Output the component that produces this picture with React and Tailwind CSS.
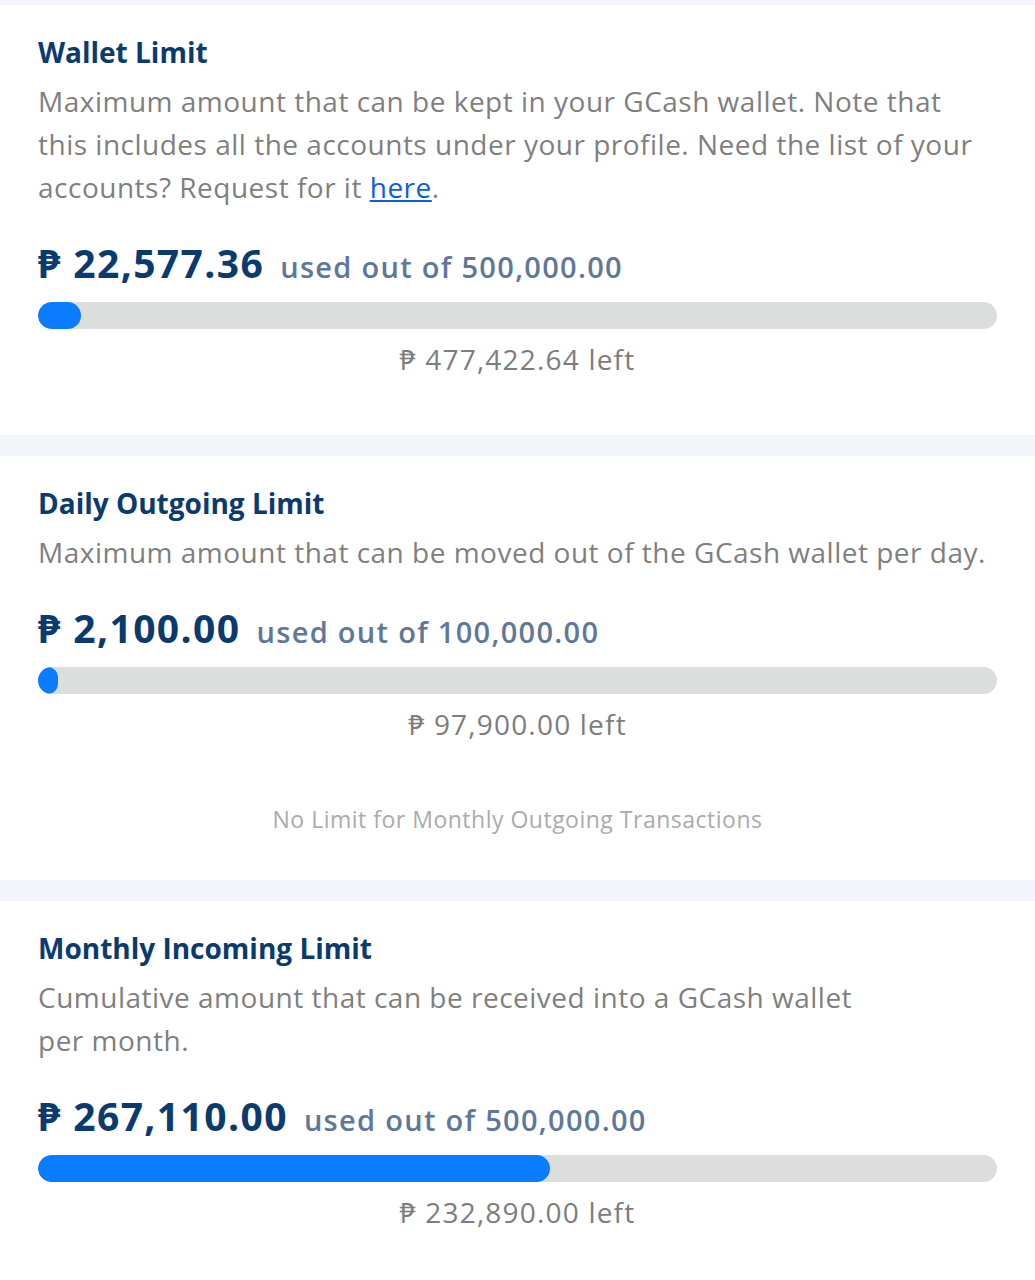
const SECTIONS = [
  {
    title: 'Wallet Limit',
    desc: (
      <>
        Maximum amount that can be kept in your GCash wallet. Note that
        <br />
        this includes all the accounts under your profile. Need the list of your
        <br />
        accounts? Request for it{' '}
        <a href="#" className="text-[#0a5fe0] underline">here</a>.
      </>
    ),
    used: '22,577.36',
    max: '500,000.00',
    pct: 4.5,
    left: '477,422.64',
  },
  {
    title: 'Daily Outgoing Limit',
    desc: 'Maximum amount that can be moved out of the GCash wallet per day.',
    used: '2,100.00',
    max: '100,000.00',
    pct: 2.1,
    left: '97,900.00',
    note: 'No Limit for Monthly Outgoing Transactions',
  },
  {
    title: 'Monthly Incoming Limit',
    desc: (
      <>
        Cumulative amount that can be received into a GCash wallet
        <br />
        per month.
      </>
    ),
    used: '267,110.00',
    max: '500,000.00',
    pct: 53.42,
    left: '232,890.00',
  },
];

function LimitCard({ s, last }) {
  return (
    <div className={`bg-white px-[38px] pt-[29px] ${s.note ? 'pb-[45px]' : last ? 'pb-[60px]' : 'pb-[56px]'}`}>
      <h2 className="text-[28px] leading-[36px] font-bold text-[#0b3a6e]">{s.title}</h2>
      <p className="mt-[10px] text-[28px] leading-[43px] tracking-[0.5px] text-[#7f7f7f] whitespace-nowrap">
        {s.desc}
      </p>

      <div className="mt-[30px] flex items-baseline gap-[16px] h-[48px] whitespace-nowrap">
        <span className="text-[39px] font-bold text-[#0b3a6e] leading-[48px] tracking-[1.4px]">
          ₱ {s.used}
        </span>
        <span className="text-[29px] font-semibold text-[#60779a] leading-[48px] tracking-[1.3px]">
          used out of {s.max}
        </span>
      </div>

      <div className="mt-[15px] h-[27px] w-full rounded-full bg-[#dcdddd] overflow-hidden">
        <div className="h-full rounded-full bg-[#0a7cff]" style={{ width: `${s.pct}%` }} />
      </div>

      <p className="mt-[10px] text-center text-[28px] leading-[40px] tracking-[1.2px] text-[#7d7d7d]">
        ₱ {s.left} left
      </p>

      {s.note && (
        <p className="mt-[59px] text-center text-[23px] leading-[32px] tracking-[0.5px] text-[#ababab]">{s.note}</p>
      )}
    </div>
  );
}

export default function App() {
  return (
    <div className="min-h-[1280px] bg-white" style={{ fontFamily: '"Open Sans", "Noto Sans", sans-serif' }}>
      <div className="flex flex-col gap-[21px] bg-[#f2f6fb] pt-[5px]">
        {SECTIONS.map((s, i) => (
          <LimitCard key={s.title} s={s} last={i === SECTIONS.length - 1} />
        ))}
      </div>
    </div>
  );
}
